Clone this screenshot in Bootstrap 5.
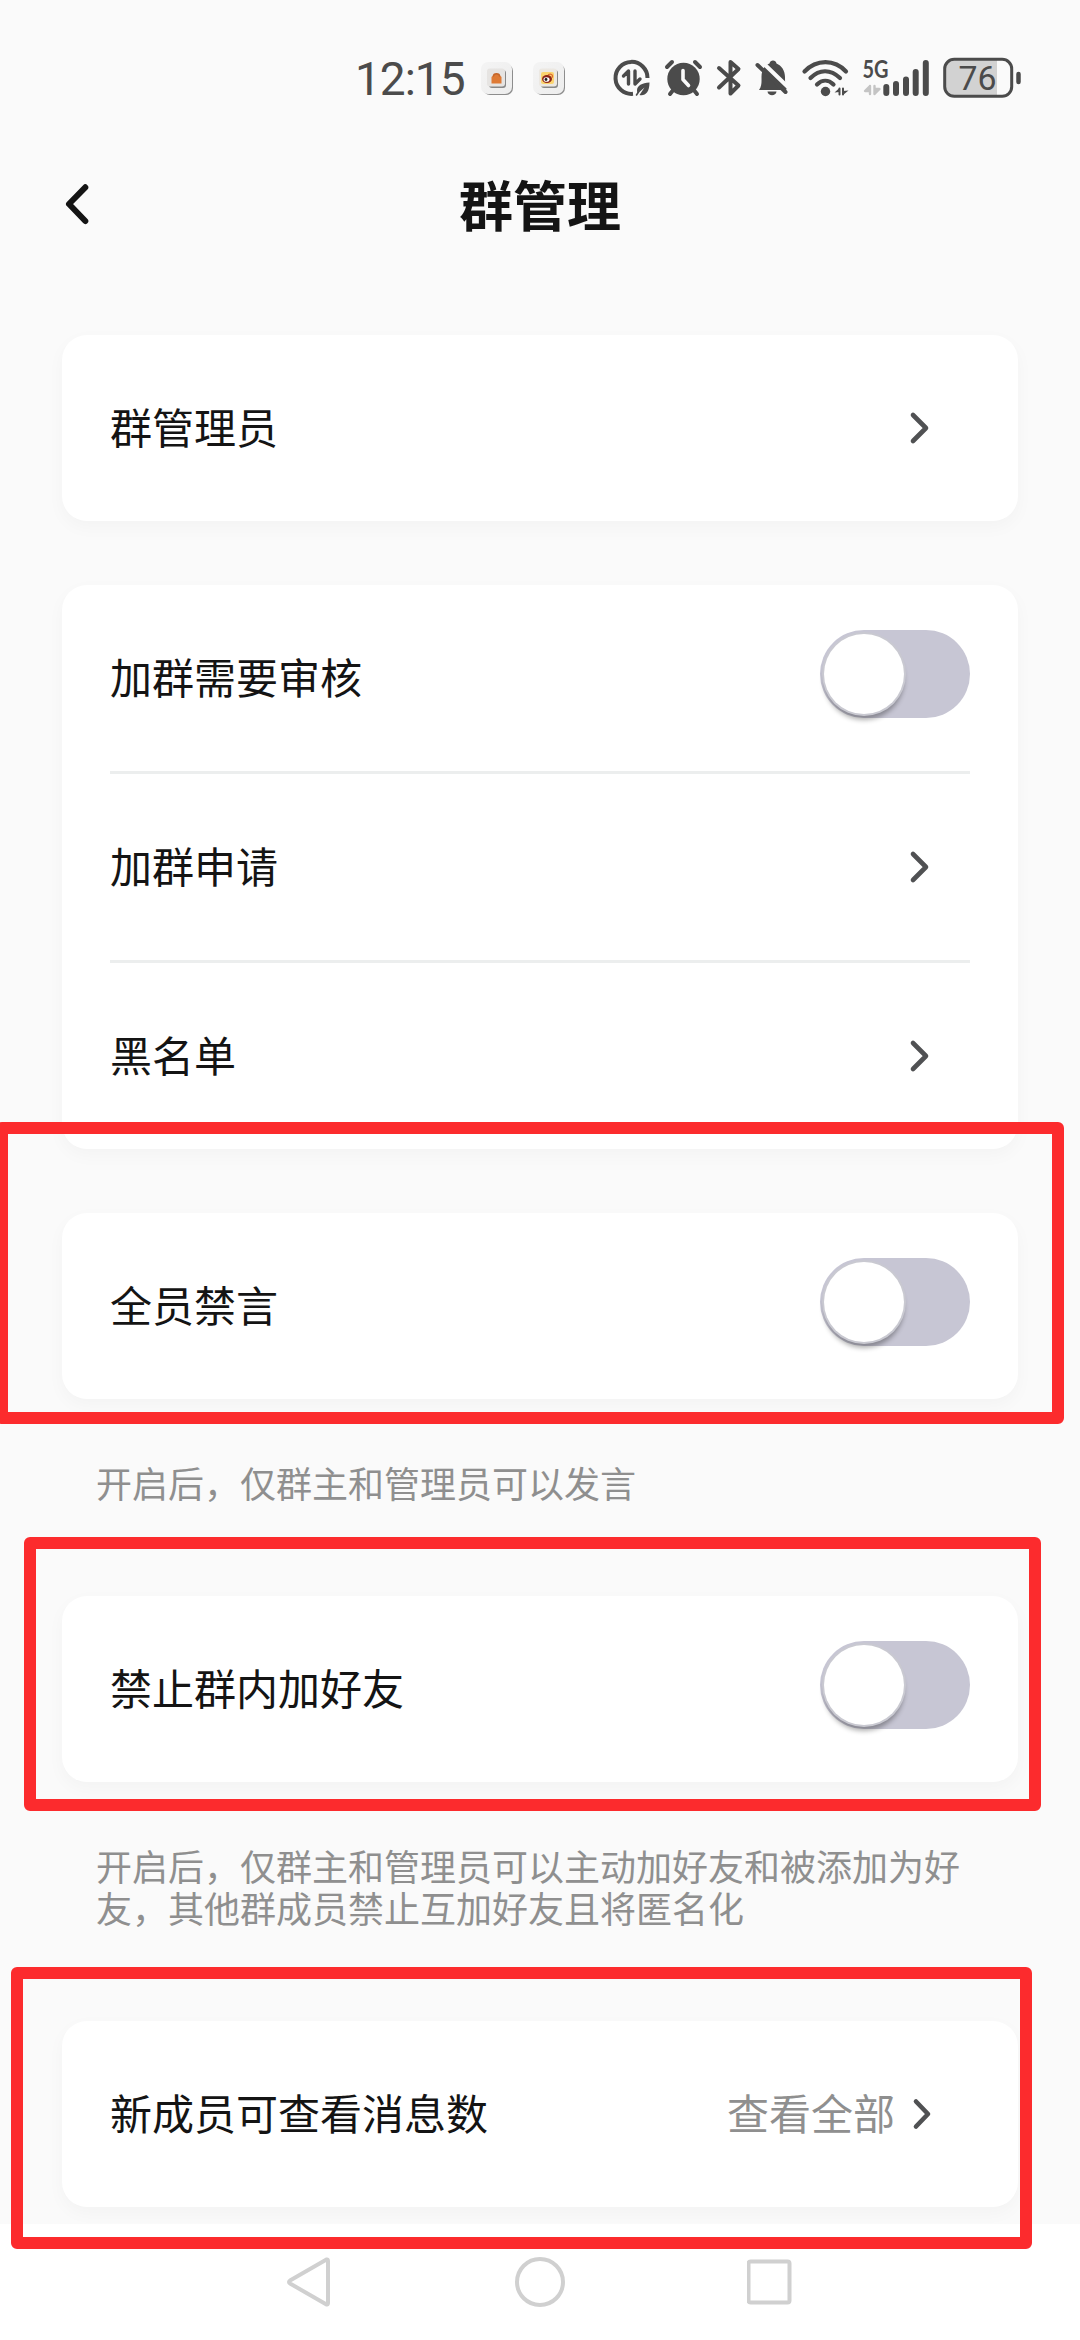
<!DOCTYPE html>
<html lang="zh-CN">
<head>
<meta charset="utf-8">
<meta name="viewport" content="width=device-width, initial-scale=1">
<title>群管理</title>
<link rel="stylesheet" href="https://cdn.jsdelivr.net/npm/bootstrap@5.3.0/dist/css/bootstrap.min.css">
<style>
  body { width: 1080px; height: 2340px; background: #fafafa; color: #141414; overflow: hidden;
    font-family: "Noto Sans CJK SC", sans-serif; font-size: 42px; line-height: 1; }
  .screen { height: 2340px; }
  .status { height: 104px; padding-left: 355px; color: #4b4b4b; padding-top: 53px; }
  .status svg { display: block; flex: none; margin-top: 3px; }
  .clock { font-family: Roboto, sans-serif; font-size: 46px; letter-spacing: -1px; line-height: 52px; width: 126px; white-space: nowrap; }
  .title-bar { height: 231px; padding: 73px 62px 0; }
  .title-bar h1 { font-size: 54px; font-weight: 700; line-height: 54px; }
  .title-bar .side { width: 40px; margin-top: 4px; }
  .panel { margin: 0 62px; border: 0; border-radius: 25px; background: #fff; padding: 0 48px; box-shadow: 0 6px 18px rgba(0,0,0,.03); }
  .panel + .panel { margin-top: 64px; }
  .item { height: 186px; }
  .item > span { padding-bottom: 4px; }
  .item + .item { height: 189px; border-top: 3px solid #eceeee; }
  .go { margin-right: 39px; display: block; }
  .value-text { color: #8f8f8f; margin-right: 17px; }
  .switch { width: 150px; height: 88px; border-radius: 44px; background: #c7c6d4; padding: 4px; margin-bottom: 8px; }
  .knob { width: 80px; height: 80px; border-radius: 50%; background: #fff; box-shadow: 0 0 0 2px #c9c9d1, 0 6px 5px 0 rgba(0,0,0,.32); }
  .hint { margin: 62px 96px 93px; width: 870px; font-size: 36px; line-height: 42px; color: #8f8f8f; }
  .nav-keys { background: #fff; height: 116px; margin-top: 17px; padding: 31px 0 0 285px; gap: 181px; }
  .outline-box { position: absolute; border: 12px solid #fc2b2d; border-radius: 6px; }
  .ob-mute { left: -4px; top: 1122px; width: 1068px; height: 302px; }
  .ob-friend { left: 24px; top: 1537px; width: 1017px; height: 274px; }
  .ob-history { left: 11px; top: 1967px; width: 1021px; height: 282px; }
</style>
</head>
<body>
<div class="screen position-relative d-flex flex-column overflow-hidden">
  <header class="status d-flex align-items-start">
    <div class="clock">12:15</div>
    <svg width="550" height="44" viewBox="481 56 550 44" fill="none" stroke-linecap="round" stroke-linejoin="round">
      <defs>
        <linearGradient id="tile" x1="0" y1="0" x2="1" y2="1"><stop offset="0" stop-color="#f4f4f4"/><stop offset="1" stop-color="#ededed"/></linearGradient>
      </defs>
      <!-- app notifications -->
      <g id="tiles">
        <rect x="483" y="64" width="30" height="31" rx="7" fill="#8d8d8d"/>
        <rect x="481" y="62" width="31" height="32" rx="7" fill="url(#tile)"/>
        <rect x="489" y="70" width="17" height="18" rx="3" fill="#888"/>
        <rect x="487" y="68.500" width="18" height="18" rx="3" fill="#e6e4e2"/>
        <path d="M491.500 77l2-2h6l2 2v6.500h-10z" fill="#de7a35"/><path d="M493.500 76c0-3 6-3 6 0" stroke="#c5652a" fill="#de7a35" stroke-width="1.500"/>
        <rect x="535" y="64" width="30" height="31" rx="7" fill="#8d8d8d"/>
        <rect x="533" y="62" width="31" height="32" rx="7" fill="url(#tile)"/>
        <rect x="541" y="70" width="17" height="18" rx="3" fill="#888"/>
        <rect x="539" y="68.500" width="18" height="18" rx="3" fill="#ece8e2"/>
        <rect x="541" y="72" width="13" height="12" rx="2" fill="#fbd470"/>
        <ellipse cx="547" cy="79" rx="5" ry="4" fill="#8d2418"/><ellipse cx="546.500" cy="79.500" rx="3" ry="2.300" fill="#fff"/><circle cx="546" cy="79.500" r="1.400" fill="#222"/>
        <path d="M548.500 74.500c2.500-1 4.500 0 4 2.500" stroke="#e06b2d" stroke-width="1.300"/>
      </g>
      <!-- data saver -->
      <path d="M647.500 78a16 16 0 1 0-14.500 15.800" stroke="#4b4b4b" stroke-width="4" stroke-linecap="butt"/>
      <path d="M628.500 84V71l-5 5M635 71v13l5-5" stroke="#4b4b4b" stroke-width="3.400"/>
      <path d="M649.500 82.500c-7.500.5-12.500 3-12.500 8 0 1.200.3 2.200.8 3l6.700-6-5 7.500c5.500 1.200 10-2.500 10-12.500z" fill="#4b4b4b"/><path d="M636.500 95l2-3" stroke="#4b4b4b" stroke-width="1.600"/>
      <!-- alarm -->
      <circle cx="683.500" cy="79" r="16.200" fill="#4b4b4b"/>
      <path d="M667 67l5-5M700 67l-5-5M674 89l-4 5M693 89l4 5" stroke="#4b4b4b" stroke-width="4"/>
      <path d="M683 70.500V79.500l5.500 6" stroke="#fafafa" stroke-width="3.600"/>
      <!-- bluetooth -->
      <path d="M719 68l19.500 17.500-8 8V62l8 7L719 87.500" stroke="#4b4b4b" stroke-width="4"/>
      <!-- muted bell -->
      <path d="M759 90c3-4 2.500-8 2.500-13 0-8 4-12 8-13.500.5-4 6.500-4 7 0 5 2 8.500 7 8.500 13.500 0 5 0 8 2 11l-1 2z" fill="#4b4b4b"/>
      <path d="M767.500 91.500h9c-.5 5-8.500 5-9 0z" fill="#4b4b4b"/>
      <path d="M761 61l28 27" stroke="#fafafa" stroke-width="4"/>
      <path d="M757.500 65l28 27" stroke="#4b4b4b" stroke-width="4"/>
      <!-- wifi -->
      <path d="M804.500 71.500c12-12.500 30-12.500 41.500 0M810.500 78c9-9 20-9 29.500 0M817 84.500c5-5 11.500-5 16.500 0" stroke="#4b4b4b" stroke-width="4.200"/>
      <circle cx="825.500" cy="91.500" r="4.700" fill="#4b4b4b"/>
      <path d="M839.500 92v-4l-5 4.500zM843 91v4l5.500-4.500z" fill="#4b4b4b"/><path d="M839.500 88.500v6M843 88.500v6" stroke="#4b4b4b" stroke-width="2"/>
      <!-- mobile signal -->
      <text x="862.500" y="77.500" font-family="Lato, sans-serif" font-weight="700" font-size="24" textLength="26" lengthAdjust="spacingAndGlyphs" fill="#4b4b4b">5G</text>
      <path d="M870 86v8M870 86l-5 5h5M874.500 86v8M874.500 94l5-5h-5" stroke="#c4c4c4" stroke-width="2.400" fill="#c4c4c4"/>
      <path d="M886.300 87v6M896 84v9M906 79.500V93M915.700 72v21M925.800 63v30" stroke="#4b4b4b" stroke-width="6"/>
      <!-- battery -->
      <path d="M953 59.500h44v36h-44a8 8 0 0 1-8-8v-20a8 8 0 0 1 8-8z" fill="#d2d2d2"/>
      <rect x="944.700" y="59.300" width="67" height="37" rx="9.500" stroke="#4b4b4b" stroke-width="3"/>
      <path d="M1018.500 74v8" stroke="#4b4b4b" stroke-width="4.500"/>
      <text x="958.500" y="90" font-family="Roboto, sans-serif" font-size="33" textLength="38" lengthAdjust="spacingAndGlyphs" fill="#4b4b4b">76</text>
    </svg>
  </header>

  <nav class="title-bar d-flex justify-content-between align-items-start">
    <svg class="side" width="40" height="46" viewBox="62 181 40 46" fill="none"><path d="M85.300 187.300L69 204l16.300 17" stroke="#141414" stroke-width="6" stroke-linecap="round" stroke-linejoin="round"/></svg>
    <h1 class="m-0">群管理</h1>
    <span class="side"></span>
  </nav>

  <main>
    <section class="card panel">
      <div class="item d-flex align-items-center justify-content-between"><span>群管理员</span>
        <svg class="go" width="22" height="34" viewBox="0 0 22 34" fill="none"><path d="M4 4l13 13L4 30" stroke="#505153" stroke-width="4.600" stroke-linecap="round" stroke-linejoin="round"/></svg></div>
    </section>
    <section class="card panel">
      <div class="item d-flex align-items-center justify-content-between"><span>加群需要审核</span><div class="switch"><div class="knob"></div></div></div>
      <div class="item d-flex align-items-center justify-content-between"><span>加群申请</span>
        <svg class="go" width="22" height="34" viewBox="0 0 22 34" fill="none"><path d="M4 4l13 13L4 30" stroke="#505153" stroke-width="4.600" stroke-linecap="round" stroke-linejoin="round"/></svg></div>
      <div class="item d-flex align-items-center justify-content-between"><span>黑名单</span>
        <svg class="go" width="22" height="34" viewBox="0 0 22 34" fill="none"><path d="M4 4l13 13L4 30" stroke="#505153" stroke-width="4.600" stroke-linecap="round" stroke-linejoin="round"/></svg></div>
    </section>
    <section class="card panel">
      <div class="item d-flex align-items-center justify-content-between"><span>全员禁言</span><div class="switch"><div class="knob"></div></div></div>
    </section>
    <p class="hint">开启后，仅群主和管理员可以发言</p>
    <section class="card panel">
      <div class="item d-flex align-items-center justify-content-between"><span>禁止群内加好友</span><div class="switch"><div class="knob"></div></div></div>
    </section>
    <p class="hint">开启后，仅群主和管理员可以主动加好友和被添加为好<br>友，其他群成员禁止互加好友且将匿名化</p>
    <section class="card panel">
      <div class="item d-flex align-items-center"><span class="me-auto">新成员可查看消息数</span><span class="value-text">查看全部</span>
        <svg class="go me-0" width="58" height="34" viewBox="0 0 58 34" fill="none"><path d="M4 4.500l12 12.500L4 29.500" stroke="#505153" stroke-width="4.600" stroke-linecap="round" stroke-linejoin="round"/></svg></div>
    </section>
  </main>

  <footer class="nav-keys d-flex align-items-start">
    <svg width="48" height="54" viewBox="285 2255 48 54" fill="none"><path d="M326.500 2259.500L290 2280.500q-2 1.500 0 3L326.500 2304.500q1.500.5 1.500-1.500v-42q0-2-1.500-1.500z" stroke="#d0d0d0" stroke-width="4" stroke-linejoin="round"/></svg>
    <svg width="52" height="54" viewBox="514 2255 52 54" fill="none"><circle cx="540" cy="2282" r="23" stroke="#d0d0d0" stroke-width="4"/></svg>
    <svg width="48" height="54" viewBox="747 2255 48 54" fill="none"><rect x="748.500" y="2261.500" width="41" height="41" rx="2" stroke="#d0d0d0" stroke-width="4"/></svg>
  </footer>

  <div class="outline-box ob-mute"></div>
  <div class="outline-box ob-friend"></div>
  <div class="outline-box ob-history"></div>
</div>
<script src="https://cdn.jsdelivr.net/npm/bootstrap@5.3.0/dist/js/bootstrap.bundle.min.js"></script>
</body>
</html>
